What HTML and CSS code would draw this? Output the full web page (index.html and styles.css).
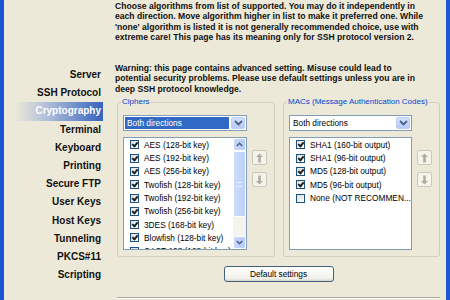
FILE: index.html
```html
<!DOCTYPE html>
<html lang="en">
<head>
    <meta charset="UTF-8">
    <title>Cryptography</title>
    <link rel="stylesheet" href="styles.css">
</head>
<body>
    <div class="dialog">
        <nav class="nav">
            <a class="nav-item">Server</a>
            <a class="nav-item">SSH Protocol</a>
            <a class="nav-item active">Cryptography</a>
            <a class="nav-item">Terminal</a>
            <a class="nav-item">Keyboard</a>
            <a class="nav-item">Printing</a>
            <a class="nav-item">Secure FTP</a>
            <a class="nav-item">User Keys</a>
            <a class="nav-item">Host Keys</a>
            <a class="nav-item">Tunneling</a>
            <a class="nav-item">PKCS#11</a>
            <a class="nav-item">Scripting</a>
        </nav>

        <main class="page">
            <p class="intro">Choose algorithms from list of supported. You may do it independently in<br>each direction. Move algorithm higher in list to make it preferred one. While<br>'none' algorithm is listed it is not generally recommended choice, use with<br>extreme care! This page has its meaning only for SSH protocol version 2.</p>

            <p class="warning">Warning: this page contains advanced setting. Misuse could lead to<br>potential security problems. Please use default settings unless you are in<br>deep SSH protocol knowledge.</p>

            <div class="groups">
                <!-- Ciphers -->
                <fieldset class="group">
                    <legend>Ciphers</legend>
                    <div class="group-body">
                        <div class="picker">
                            <div class="combo">
                                <span class="combo-text selected">Both directions</span>
                                <span class="combo-btn">
                                    <svg width="9" height="6" viewBox="0 0 9 6"><path d="M1 1 L4.5 4.5 L8 1" fill="none" stroke="#4d6185" stroke-width="1.8"/></svg>
                                </span>
                            </div>
                            <div class="listbox">
                                <ul class="items">
                                    <li class="item"><span class="check on"></span>AES (128-bit key)</li>
                                    <li class="item"><span class="check on"></span>AES (192-bit key)</li>
                                    <li class="item"><span class="check on"></span>AES (256-bit key)</li>
                                    <li class="item"><span class="check on"></span>Twofish (128-bit key)</li>
                                    <li class="item"><span class="check on"></span>Twofish (192-bit key)</li>
                                    <li class="item"><span class="check on"></span>Twofish (256-bit key)</li>
                                    <li class="item"><span class="check on"></span>3DES (168-bit key)</li>
                                    <li class="item"><span class="check on"></span>Blowfish (128-bit key)</li>
                                    <li class="item"><span class="check on"></span>CAST-128 (128-bit key)</li>
                                </ul>
                                <div class="scrollbar">
                                    <span class="sb-btn">
                                        <svg width="7" height="5" viewBox="0 0 7 5"><path d="M0.8 4 L3.5 1.3 L6.2 4" fill="none" stroke="#4d6185" stroke-width="1.6"/></svg>
                                    </span>
                                    <span class="sb-thumb"><span class="grip"></span></span>
                                    <span class="sb-track"></span>
                                    <span class="sb-btn">
                                        <svg width="7" height="5" viewBox="0 0 7 5"><path d="M0.8 1 L3.5 3.7 L6.2 1" fill="none" stroke="#4d6185" stroke-width="1.6"/></svg>
                                    </span>
                                </div>
                            </div>
                        </div>
                        <div class="movers">
                            <button class="mover">
                                <svg width="9" height="10" viewBox="0 0 9 10"><path d="M4.5 0.5 L8 4 L5.8 4 L5.8 9.5 L3.2 9.5 L3.2 4 L1 4 Z" fill="#aeada4"/></svg>
                            </button>
                            <button class="mover">
                                <svg width="9" height="10" viewBox="0 0 9 10"><path d="M4.5 9.5 L8 6 L5.8 6 L5.8 0.5 L3.2 0.5 L3.2 6 L1 6 Z" fill="#aeada4"/></svg>
                            </button>
                        </div>
                    </div>
                </fieldset>

                <!-- MACs -->
                <fieldset class="group">
                    <legend>MACs (Message Authentication Codes)</legend>
                    <div class="group-body">
                        <div class="picker">
                            <div class="combo">
                                <span class="combo-text">Both directions</span>
                                <span class="combo-btn">
                                    <svg width="9" height="6" viewBox="0 0 9 6"><path d="M1 1 L4.5 4.5 L8 1" fill="none" stroke="#4d6185" stroke-width="1.8"/></svg>
                                </span>
                            </div>
                            <div class="listbox">
                                <ul class="items">
                                    <li class="item"><span class="check on"></span>SHA1 (160-bit output)</li>
                                    <li class="item"><span class="check on"></span>SHA1 (96-bit output)</li>
                                    <li class="item"><span class="check on"></span>MD5 (128-bit output)</li>
                                    <li class="item"><span class="check on"></span>MD5 (96-bit output)</li>
                                    <li class="item"><span class="check"></span>None (NOT RECOMMEN...</li>
                                </ul>
                            </div>
                        </div>
                        <div class="movers">
                            <button class="mover">
                                <svg width="9" height="10" viewBox="0 0 9 10"><path d="M4.5 0.5 L8 4 L5.8 4 L5.8 9.5 L3.2 9.5 L3.2 4 L1 4 Z" fill="#aeada4"/></svg>
                            </button>
                            <button class="mover">
                                <svg width="9" height="10" viewBox="0 0 9 10"><path d="M4.5 9.5 L8 6 L5.8 6 L5.8 0.5 L3.2 0.5 L3.2 6 L1 6 Z" fill="#aeada4"/></svg>
                            </button>
                        </div>
                    </div>
                </fieldset>
            </div>

            <div class="actions">
                <button class="btn">Default settings</button>
            </div>
            <div class="separator"></div>
        </main>
    </div>
</body>
</html>
```

FILE: styles.css
```css
:root {
    --frame: #1b56d4;
    --face: #ece9d8;
    --group-border: #d0d0bf;
    --legend: #0046d5;
    --field-border: #7f9db9;
    --select: #316ac5;
    --text: #000000;
}

* {
    box-sizing: border-box;
}

body {
    margin: 0;
    width: 450px;
    height: 300px;
    overflow: hidden;
    background-color: var(--face);
    font-family: 'Liberation Sans', Arial, sans-serif;
    color: var(--text);
}

.dialog {
    display: flex;
    width: 450px;
    height: 300px;
    border-left: 4px solid var(--frame);
    border-right: 4px solid var(--frame);
}

/* Left navigation */
.nav {
    width: 107px;
    flex-shrink: 0;
    display: flex;
    flex-direction: column;
    align-items: stretch;
    padding-top: 66px;
}

.nav-item {
    height: 18.2px;
    line-height: 18.2px;
    margin: 0 8px 0 11px;
    padding-right: 2px;
    text-align: right;
    font-size: 10px;
    font-weight: bold;
    color: #111;
}

.nav-item.active {
    color: #fff;
    background: linear-gradient(to right, var(--face) 0%, #b3c0d8 35%, #3663bf 100%);
}

/* Right page */
.page {
    flex: 1;
    min-width: 0;
    padding: 1px 0 0 4px;
    display: flex;
    flex-direction: column;
}

.intro,
.warning {
    margin: 0;
    font-size: 8.6px;
    font-weight: bold;
    line-height: 10.3px;
    white-space: nowrap;
    color: #111;
}

.warning {
    margin-top: 20.5px;
    line-height: 10.5px;
}

.groups {
    display: flex;
    gap: 8px;
    margin: 3px 0 0 2px;
}

.group {
    margin: 0;
    width: 158px;
    flex-shrink: 0;
    padding: 8px 7px 6px 5px;
    border: 1px solid var(--group-border);
    border-radius: 3px;
    min-width: 0;
}

.group + .group {
    width: 157px;
}

.group legend {
    padding: 0 1px;
    margin-left: -2px;
    font-size: 8px;
    line-height: 10px;
    color: var(--legend);
    white-space: nowrap;
}

.group-body {
    display: flex;
}

.picker {
    flex: 1;
    display: flex;
    flex-direction: column;
    gap: 6px;
    min-width: 0;
}

.combo {
    height: 16px;
    display: flex;
    border: 1px solid var(--field-border);
    background: #fff;
    padding: 1px;
}

.combo-text {
    flex: 1;
    font-size: 8.3px;
    line-height: 12px;
    padding-left: 2px;
}

.combo-text.selected {
    background-color: var(--select);
    color: #fff;
    margin-right: 2px;
}

.combo-btn {
    width: 14px;
    display: flex;
    align-items: center;
    justify-content: center;
    border: 1px solid #bccdf5;
    border-radius: 2px;
    background: linear-gradient(#d3e0fd, #b7cbf7);
}

.listbox {
    height: 113px;
    display: flex;
    border: 1px solid var(--field-border);
    background: #fff;
    overflow: hidden;
}

.items {
    flex: 1;
    list-style: none;
    margin: 0;
    padding: 0;
    min-width: 0;
}

.item {
    height: 13.3px;
    display: flex;
    align-items: center;
    gap: 5px;
    padding-left: 6px;
    font-size: 8.3px;
    white-space: nowrap;
}

.check {
    width: 9px;
    height: 9px;
    flex-shrink: 0;
    border: 1px solid #1c5180;
    background: linear-gradient(135deg, #dcdcd5, #fff);
    position: relative;
}

.check.on::after {
    content: "";
    position: absolute;
    left: 2px;
    top: 0;
    width: 2px;
    height: 4px;
    border: solid #222;
    border-width: 0 2px 2px 0;
    transform: rotate(40deg);
}

.scrollbar {
    width: 13px;
    flex-shrink: 0;
    display: flex;
    flex-direction: column;
    background: #f4f3ee;
}

.sb-btn {
    height: 13px;
    display: flex;
    align-items: center;
    justify-content: center;
    border: 1px solid #fff;
    border-radius: 2px;
    background: linear-gradient(to right, #c8d8fc, #b9cdf8);
}

.sb-thumb {
    height: 66px;
    display: flex;
    align-items: center;
    justify-content: center;
    border: 1px solid #fff;
    border-radius: 2px;
    background: linear-gradient(to right, #cddbfc, #bfd1f9);
}

.grip {
    width: 5px;
    height: 5px;
    border-top: 1px solid #eef3fe;
    border-bottom: 1px solid #eef3fe;
}

.sb-track {
    flex: 1;
}

.movers {
    width: 15px;
    flex-shrink: 0;
    margin: 35px 0 0 5px;
    display: flex;
    flex-direction: column;
    gap: 7px;
}

.mover {
    width: 15px;
    height: 15px;
    padding: 0;
    display: flex;
    align-items: center;
    justify-content: center;
    border: 1px solid #cac8bb;
    border-radius: 2px;
    background: #f5f4ea;
}

.actions {
    display: flex;
    justify-content: center;
    width: 323px;
    margin: 9px 0 0 2px;
}

.btn {
    width: 110px;
    height: 16px;
    padding: 0;
    border: 1px solid #45607e;
    border-radius: 3px;
    background: linear-gradient(#ffffff, #f0f0ea 85%, #d6d0c5);
    font-family: inherit;
    font-size: 8.3px;
    color: #000;
}

.separator {
    width: 323px;
    margin: 15px 0 0 2px;
    border-top: 1px solid #aca899;
    border-bottom: 1px solid #fff;
}
```
